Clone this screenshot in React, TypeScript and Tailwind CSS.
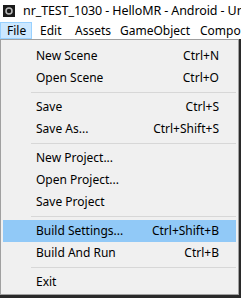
export default function App() {
  const font = { fontFamily: '"Noto Sans", "Open Sans", sans-serif' };
  return (
    <div className="w-[241px] h-[298px] bg-[#2a2a2a] overflow-hidden text-black" style={font}>
      {/* title bar */}
      <div className="h-[22px] bg-white flex items-center">
        <div className="w-[12px] h-[12px] ml-[3px] shrink-0 bg-[#1a1a1a] flex items-center justify-center">
          <svg width="8" height="8" viewBox="0 0 16 16">
            <circle cx="8" cy="8" r="6" fill="none" stroke="#bbb" strokeWidth="3" />
          </svg>
        </div>
        <span className="ml-[8px] text-[12.5px] tracking-[-0.1px] whitespace-nowrap leading-none">nr_TEST_1030 - HelloMR - Android - Un</span>
      </div>
      {/* menu bar */}
      <div className="h-[17px] bg-white flex items-stretch overflow-hidden text-[12px] leading-none whitespace-nowrap">
        <div className="w-[32px] shrink-0 bg-[#cce8ff] border border-[#99d1ff] flex items-center pl-[6px]">File</div>
        <div className="w-[43px] shrink-0 flex items-center pl-[8px]">Edit</div>
        <div className="w-[45px] shrink-0 flex items-center">Assets</div>
        <div className="w-[80px] shrink-0 flex items-center">GameObject</div>
        <div className="shrink-0 flex items-center">Component</div>
      </div>
      {/* dropdown */}
      <div className="w-[239px] h-[256px] bg-[#f0f0f0] border border-[#a0a0a0] pt-[5px] text-[12px] leading-none whitespace-nowrap">
        <Item label="New Scene" shortcut="Ctrl+N" />
        <Item label="Open Scene" shortcut="Ctrl+O" />
        <Sep />
        <Item label="Save" shortcut="Ctrl+S" />
        <Item label="Save As..." shortcut="Ctrl+Shift+S" />
        <Sep />
        <Item label="New Project..." />
        <Item label="Open Project..." />
        <Item label="Save Project" />
        <Sep />
        <Item label="Build Settings..." shortcut="Ctrl+Shift+B" active />
        <Item label="Build And Run" shortcut="Ctrl+B" />
        <Sep />
        <Item label="Exit" />
      </div>
    </div>
  );
}

function Item({ label, shortcut, active }: { label: string; shortcut?: string; active?: boolean }) {
  return (
    <div className={`h-[22px] mx-[2px] flex items-center pl-[33px] pr-[17px] ${active ? "bg-[#91c9f7]" : ""}`}>
      <span className="flex-1">{label}</span>
      {shortcut && <span>{shortcut}</span>}
    </div>
  );
}

function Sep() {
  return (
    <div className="h-[7px] flex items-center pl-[30px] pr-[2px]">
      <div className="h-px w-full bg-[#d7d7d7]" />
    </div>
  );
}
